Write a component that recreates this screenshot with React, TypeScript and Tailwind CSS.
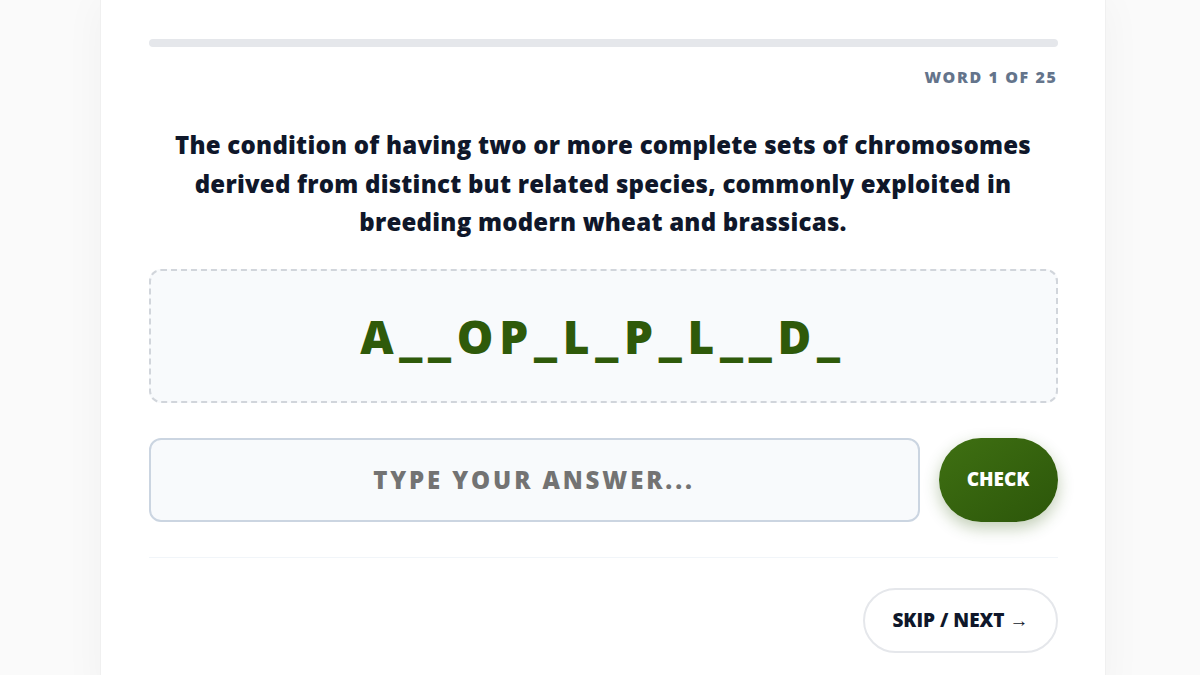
import { useState } from "react";

const font = { fontFamily: '"Open Sans", "Noto Sans", sans-serif' };

export default function App() {
  const [answer, setAnswer] = useState("");

  return (
    <div
      className="min-h-screen bg-[#fafafa] flex justify-center pl-[5px]"
      style={font}
    >
      <div className="w-[1006px] bg-white border-x border-[#f0f0f0] shadow-[0_0_40px_rgba(0,0,0,0.04)] pl-12 pr-[47px] pt-[39px] pb-12">
        {/* Progress */}
        <div className="h-2 w-full rounded-full bg-[#e5e7eb]" />
        <div className="mt-[20px] text-right text-[16px] font-extrabold tracking-[0.1em] text-[#64748b] leading-5">
          WORD 1 OF 25
        </div>

        {/* Question */}
        <p className="mt-[39px] px-5 text-center text-[24px] font-extrabold tracking-[0.01em] leading-[38.5px] text-[#0f172a]">
          The condition of having two or more complete sets of chromosomes
          derived from distinct but related species, commonly exploited in
          breeding modern wheat and brassicas.
        </p>

        {/* Hint */}
        <div className="mt-[27px] h-[134px] rounded-xl border-2 border-dashed border-[#d1d5db] bg-[#f8fafc] flex items-center justify-center">
          <span className="text-[46px] font-extrabold tracking-[0.125em] text-[#2f5a0a] leading-none">
            A__OP_L_P_L__D_
          </span>
        </div>

        {/* Answer row */}
        <div className="mt-[35px] flex gap-[19px]">
          <input
            value={answer}
            onChange={(e) => setAnswer(e.target.value)}
            placeholder="TYPE YOUR ANSWER..."
            className="flex-1 h-[84px] rounded-xl border-2 border-[#cbd5e1] bg-[#f8fafc] text-center text-[24px] font-extrabold tracking-[0.12em] text-[#0f172a] placeholder:text-[#737373] outline-none"
            style={font}
          />
          <button className="w-[119px] h-[84px] rounded-full bg-gradient-to-br from-[#3f7012] to-[#2c560a] text-white text-[19px] font-extrabold shadow-[0_6px_16px_rgba(47,90,10,0.3)]">
            CHECK
          </button>
        </div>

        {/* Footer */}
        <div className="mt-[35px] border-t border-[#f1f5f9] pt-[30px] flex justify-end">
          <button className="h-[65px] px-[27px] rounded-full border-2 border-[#e5e7eb] bg-white text-[19px] font-extrabold text-[#0f172a]">
            SKIP / NEXT →
          </button>
        </div>
      </div>
    </div>
  );
}
